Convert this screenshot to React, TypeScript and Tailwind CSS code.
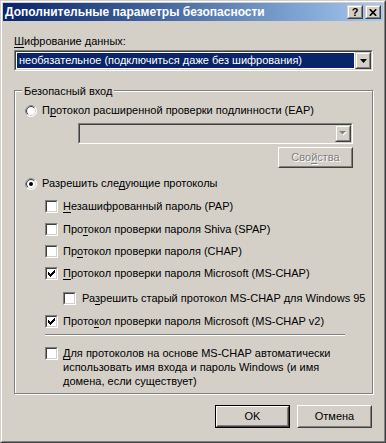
import React from "react";

const U = ({ children }: { children: React.ReactNode }) => (
  <span className="underline underline-offset-[2px] decoration-1">{children}</span>
);

function Raised({ className = "", children, dflt }: { className?: string; children?: React.ReactNode; dflt?: boolean }) {
  const inner = (
    <div className="w-full h-full border border-t-white border-l-white border-r-[#404040] border-b-[#404040]">
      <div className="w-full h-full border border-t-[#D4D0C8] border-l-[#D4D0C8] border-r-[#808080] border-b-[#808080] flex items-center justify-center">
        {children}
      </div>
    </div>
  );
  if (dflt) return <div className={`border border-black ${className}`}>{inner}</div>;
  return <div className={className}>{inner}</div>;
}

function Sunken({ className = "", children, bg = "bg-white" }: { className?: string; children?: React.ReactNode; bg?: string }) {
  return (
    <div className={`border border-t-[#808080] border-l-[#808080] border-r-white border-b-white ${className}`}>
      <div className={`w-full h-full border border-t-[#404040] border-l-[#404040] border-r-[#D4D0C8] border-b-[#D4D0C8] ${bg} flex`}>
        {children}
      </div>
    </div>
  );
}

function Arrow({ disabled }: { disabled?: boolean }) {
  if (disabled)
    return (
      <svg width="8" height="5" viewBox="0 0 8 5" className="block">
        <polygon points="1,1 8,1 4.5,4.5" fill="#ffffff" />
        <polygon points="0,0 7,0 3.5,3.5" fill="#808080" />
      </svg>
    );
  return (
    <svg width="7" height="4" viewBox="0 0 7 4" className="block">
      <polygon points="0,0 7,0 3.5,4" fill="#000" />
    </svg>
  );
}

function DropBtn({ disabled }: { disabled?: boolean }) {
  return (
    <div className="w-[16px] h-full shrink-0 border border-t-[#D4D0C8] border-l-[#D4D0C8] border-r-[#404040] border-b-[#404040]">
      <div className="w-full h-full border border-t-white border-l-white border-r-[#808080] border-b-[#808080] bg-[#D4D0C8] flex items-center justify-center">
        <Arrow disabled={disabled} />
      </div>
    </div>
  );
}

function Check({ checked }: { checked?: boolean }) {
  const cols: [number, number][] = [
    [0, 2], [1, 3], [2, 4], [3, 3], [4, 2], [5, 1], [6, 0],
  ];
  return (
    <Sunken className="w-[13px] h-[13px] shrink-0">
      {checked && (
        <svg width="9" height="9" viewBox="0 0 9 9" className="block" shapeRendering="crispEdges">
          {cols.map(([x, y]) => (
            <rect key={x} x={x + 1} y={y + 1} width="1" height="3" fill="#000" />
          ))}
        </svg>
      )}
    </Sunken>
  );
}

function Radio({ checked }: { checked?: boolean }) {
  return (
    <svg width="12" height="12" viewBox="0 0 12 12" className="block shrink-0">
      <defs>
        <clipPath id="tl">
          <polygon points="0,0 12,0 0,12" />
        </clipPath>
      </defs>
      <circle cx="6" cy="6" r="5.5" fill="#fff" stroke="#ffffff" strokeWidth="1" />
      <circle cx="6" cy="6" r="5.5" fill="none" stroke="#808080" strokeWidth="1" clipPath="url(#tl)" />
      <circle cx="6" cy="6" r="4.5" fill="#fff" stroke="#D4D0C8" strokeWidth="1" />
      <circle cx="6" cy="6" r="4.5" fill="none" stroke="#404040" strokeWidth="1" clipPath="url(#tl)" />
      {checked && <circle cx="6" cy="6" r="2" fill="#000" />}
    </svg>
  );
}

function CbRow({ checked, children, ml = "ml-[20px]", gap = "gap-[5px]", mt }: { checked?: boolean; children: React.ReactNode; ml?: string; gap?: string; mt: string }) {
  return (
    <div className={`flex items-center h-[13px] ${ml} ${gap} ${mt}`}>
      <Check checked={checked} />
      <span className="whitespace-nowrap">{children}</span>
    </div>
  );
}

function TitleBtn({ children }: { children: React.ReactNode }) {
  return (
    <div className="w-[16px] h-[14px] border border-t-[#D4D0C8] border-l-[#D4D0C8] border-r-[#404040] border-b-[#404040]">
      <div className="w-full h-full border border-t-white border-l-white border-r-[#808080] border-b-[#808080] bg-[#D4D0C8] flex items-center justify-center">
        {children}
      </div>
    </div>
  );
}

export default function App() {
  return (
    <div className="w-[386px] h-[443px] bg-[#D4D0C8] border border-t-[#D4D0C8] border-l-[#D4D0C8] border-r-[#404040] border-b-[#404040] font-['Liberation_Sans',Arial,sans-serif] text-[11px] leading-[13px] text-black">
      <div className="h-full border border-t-white border-l-white border-r-[#808080] border-b-[#808080] p-px flex flex-col">
        <div className="h-[18px] shrink-0 bg-gradient-to-r from-[#0A246A] to-[#A6CAF0] flex items-center pl-[2px] pr-[2px]">
          <span className="flex-1 text-white font-bold text-[12px] leading-[14px] whitespace-nowrap">
            Дополнительные параметры безопасности
          </span>
          <TitleBtn>
            <span className="font-bold text-[11px] leading-[11px] text-black">?</span>
          </TitleBtn>
          <div className="w-[2px]" />
          <TitleBtn>
            <svg width="8" height="7" viewBox="0 0 8 7" className="block">
              <path d="M0.8 0.2 L7.2 6.8 M7.2 0.2 L0.8 6.8" stroke="#000" strokeWidth="1.6" />
            </svg>
          </TitleBtn>
        </div>

        <div className="flex-1 pl-[11px] pr-[10px] flex flex-col">
          <div className="mt-[14px] h-[13px] whitespace-nowrap">
            <U>Ш</U>ифрование данных:
          </div>
          <Sunken className="mt-[2px] h-[21px] w-full">
            <div className="flex-1 p-px bg-white">
              <div className="h-full bg-[#0A246A] text-white pl-[2px] flex items-center whitespace-nowrap">
                необязательное (подключиться даже без шифрования)
              </div>
            </div>
            <DropBtn />
          </Sunken>

          <div className="relative mt-[19px] border border-[#808080] shadow-[inset_1px_1px_0_#ffffff,1px_1px_0_#ffffff] pl-[10px] pt-[13px] pb-[5px] flex flex-col">
            <span className="absolute left-[7px] top-[-6px] px-[2px] bg-[#D4D0C8] whitespace-nowrap">Безопасный вход</span>

            <div className="flex items-center h-[13px] gap-[5px]">
              <Radio />
              <span className="whitespace-nowrap">
                П<U>р</U>отокол расширенной проверки подлинности (EAP)
              </span>
            </div>

            <Sunken className="mt-[6px] ml-[53px] w-[275px] h-[21px]" bg="bg-[#D4D0C8]">
              <div className="flex-1" />
              <DropBtn disabled />
            </Sunken>

            <Raised className="mt-[3px] ml-[253px] w-[75px] h-[21px]">
              <span className="text-[#808080] [text-shadow:1px_1px_0_#ffffff]">
                Сво<U>й</U>ства
              </span>
            </Raised>

            <div className="mt-[9px] flex items-center h-[13px] gap-[5px]">
              <Radio checked />
              <span className="whitespace-nowrap">
                Разрешить сле<U>д</U>ующие протоколы
              </span>
            </div>

            <CbRow mt="mt-[10px]">
              <U>Н</U>езашифрованный пароль (PAP)
            </CbRow>
            <CbRow mt="mt-[10px]">
              Про<U>т</U>окол проверки пароля Shiva (SPAP)
            </CbRow>
            <CbRow mt="mt-[9px]">
              Пр<U>о</U>токол проверки пароля (CHAP)
            </CbRow>
            <CbRow mt="mt-[9px]" checked>
              <U>П</U>ротокол проверки пароля Microsoft (MS-CHAP)
            </CbRow>
            <CbRow mt="mt-[12px]" ml="ml-[38px]" gap="gap-[6px]">
              Ра<U>з</U>решить старый протокол MS-CHAP для Windows 95
            </CbRow>
            <CbRow mt="mt-[10px]" checked>
              Прото<U>к</U>ол проверки пароля Microsoft (MS-CHAP v2)
            </CbRow>

            <div className="mt-[6px] ml-[20px] w-[300px] h-[2px] border-t border-t-[#808080] border-b border-b-white" />

            <div className="mt-[11px] ml-[20px] flex items-start gap-[5px]">
              <Check />
              <span className="leading-[14px] whitespace-nowrap -mt-px">
                <U>Д</U>ля протоколов на основе MS-CHAP автоматически
                <br />
                использовать имя входа и пароль Windows (и имя
                <br />
                домена, если существует)
              </span>
            </div>
          </div>

          <div className="mt-[11px] flex justify-end gap-[7px] pr-px">
            <Raised dflt className="w-[75px] h-[23px]">
              <span>OK</span>
            </Raised>
            <Raised className="w-[75px] h-[23px]">
              <span>Отмена</span>
            </Raised>
          </div>
        </div>
      </div>
    </div>
  );
}
